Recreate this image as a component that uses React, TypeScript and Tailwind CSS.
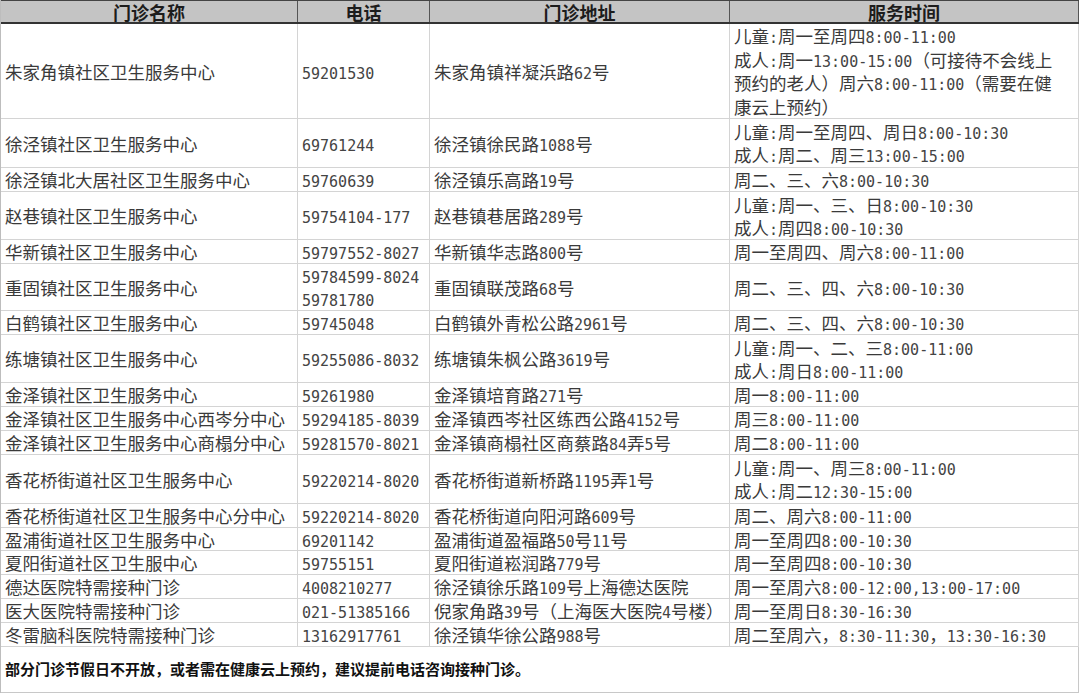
type Row = {
  name: string;
  phone: string[];
  addr: string;
  time: string[];
  h: string;
};

const rows: Row[] = [
  {
    name: "朱家角镇社区卫生服务中心",
    phone: ["59201530"],
    addr: "朱家角镇祥凝浜路62号",
    time: [
      "儿童:周一至周四8:00-11:00",
      "成人:周一13:00-15:00（可接待不会线上",
      "预约的老人）周六8:00-11:00（需要在健",
      "康云上预约）",
    ],
    h: "h-[95px]",
  },
  {
    name: "徐泾镇社区卫生服务中心",
    phone: ["69761244"],
    addr: "徐泾镇徐民路1088号",
    time: ["儿童:周一至周四、周日8:00-10:30", "成人:周二、周三13:00-15:00"],
    h: "h-[49px]",
  },
  {
    name: "徐泾镇北大居社区卫生服务中心",
    phone: ["59760639"],
    addr: "徐泾镇乐高路19号",
    time: ["周二、三、六8:00-10:30"],
    h: "h-[24px]",
  },
  {
    name: "赵巷镇社区卫生服务中心",
    phone: ["59754104-177"],
    addr: "赵巷镇巷居路289号",
    time: ["儿童:周一、三、日8:00-10:30", "成人:周四8:00-10:30"],
    h: "h-[48px]",
  },
  {
    name: "华新镇社区卫生服务中心",
    phone: ["59797552-8027"],
    addr: "华新镇华志路800号",
    time: ["周一至周四、周六8:00-11:00"],
    h: "h-[24px]",
  },
  {
    name: "重固镇社区卫生服务中心",
    phone: ["59784599-8024", "59781780"],
    addr: "重固镇联茂路68号",
    time: ["周二、三、四、六8:00-10:30"],
    h: "h-[47px]",
  },
  {
    name: "白鹤镇社区卫生服务中心",
    phone: ["59745048"],
    addr: "白鹤镇外青松公路2961号",
    time: ["周二、三、四、六8:00-10:30"],
    h: "h-[24px]",
  },
  {
    name: "练塘镇社区卫生服务中心",
    phone: ["59255086-8032"],
    addr: "练塘镇朱枫公路3619号",
    time: ["儿童:周一、二、三8:00-11:00", "成人:周日8:00-11:00"],
    h: "h-[48px]",
  },
  {
    name: "金泽镇社区卫生服务中心",
    phone: ["59261980"],
    addr: "金泽镇培育路271号",
    time: ["周一8:00-11:00"],
    h: "h-[24px]",
  },
  {
    name: "金泽镇社区卫生服务中心西岑分中心",
    phone: ["59294185-8039"],
    addr: "金泽镇西岑社区练西公路4152号",
    time: ["周三8:00-11:00"],
    h: "h-[24px]",
  },
  {
    name: "金泽镇社区卫生服务中心商榻分中心",
    phone: ["59281570-8021"],
    addr: "金泽镇商榻社区商蔡路84弄5号",
    time: ["周二8:00-11:00"],
    h: "h-[24px]",
  },
  {
    name: "香花桥街道社区卫生服务中心",
    phone: ["59220214-8020"],
    addr: "香花桥街道新桥路1195弄1号",
    time: ["儿童:周一、周三8:00-11:00", "成人:周二12:30-15:00"],
    h: "h-[49px]",
  },
  {
    name: "香花桥街道社区卫生服务中心分中心",
    phone: ["59220214-8020"],
    addr: "香花桥街道向阳河路609号",
    time: ["周二、周六8:00-11:00"],
    h: "h-[24px]",
  },
  {
    name: "盈浦街道社区卫生服务中心",
    phone: ["69201142"],
    addr: "盈浦街道盈福路50号11号",
    time: ["周一至周四8:00-10:30"],
    h: "h-[23px]",
  },
  {
    name: "夏阳街道社区卫生服中心",
    phone: ["59755151"],
    addr: "夏阳街道崧润路779号",
    time: ["周一至周四8:00-10:30"],
    h: "h-[24px]",
  },
  {
    name: "德达医院特需接种门诊",
    phone: ["4008210277"],
    addr: "徐泾镇徐乐路109号上海德达医院",
    time: ["周一至周六8:00-12:00,13:00-17:00"],
    h: "h-[24px]",
  },
  {
    name: "医大医院特需接种门诊",
    phone: ["021-51385166"],
    addr: "倪家角路39号（上海医大医院4号楼）",
    time: ["周一至周日8:30-16:30"],
    h: "h-[24px]",
  },
  {
    name: "冬雷脑科医院特需接种门诊",
    phone: ["13162917761"],
    addr: "徐泾镇华徐公路988号",
    time: ["周二至周六，8:30-11:30，13:30-16:30"],
    h: "h-[24px]",
  },
];

const cols = ["w-[297px]", "w-[132px]", "w-[300px]", "flex-1"];

// half-width runs are set in a mono face so digits get the 0.5em advance of the original
function Txt({ s }: { s: string }) {
  const parts = s.split(/([\x20-\x7e]+)/);
  return (
    <>
      {parts.map((p, i) =>
        i % 2 === 1 ? (
          <span key={i} className="text-[15px] text-[#444]" style={{ fontFamily: "'DejaVu Sans Mono', monospace" }}>
            {p}
          </span>
        ) : (
          <span key={i}>{p}</span>
        )
      )}
    </>
  );
}

function Lines({ items }: { items: string[] }) {
  const lh = items.length > 3 ? "h-[23.5px] leading-[23.5px]" : "h-[23px] leading-[23px]";
  return (
    <div className="flex flex-col">
      {items.map((t, j) => (
        <div key={j} className={lh}>
          <Txt s={t} />
        </div>
      ))}
    </div>
  );
}

export default function App() {
  const cell = "flex items-center pl-1 border-r border-[#d4d4d4] whitespace-nowrap leading-[23px]";
  return (
    <div
      className="w-[1080px] h-[694px] bg-white overflow-hidden text-[17.5px] text-[#3a3a3a]"
      style={{ fontFamily: "'Noto Sans CJK SC', sans-serif" }}
    >
      <div className="w-[1079px] border-l border-[#bdbdbd]">
        <div className="flex h-[24px] bg-[#c4c4c4] border-t border-t-[#444] border-b-2 border-b-[#333] font-bold text-[18px] text-[#1c1c1c]">
          {["门诊名称", "电话", "门诊地址", "服务时间"].map((t, i) => (
            <div
              key={t}
              className={cols[i] + " flex items-center justify-center border-r border-[#555] leading-none"}
            >
              {t}
            </div>
          ))}
        </div>
        {rows.map((r, i) => (
          <div key={i} className={"flex border-b border-[#d4d4d4] " + r.h}>
            <div className={cols[0] + " " + cell}>{r.name}</div>
            <div className={cols[1] + " " + cell}>
              <Lines items={r.phone} />
            </div>
            <div className={cols[2] + " " + cell}>
              <Lines items={[r.addr]} />
            </div>
            <div className={cols[3] + " " + cell}>
              <Lines items={r.time} />
            </div>
          </div>
        ))}
        <div className="h-[46px] flex items-center pl-1 border-r border-b border-[#c8c8c8] font-bold text-[15px] text-[#111] whitespace-nowrap">
          部分门诊节假日不开放，或者需在健康云上预约，建议提前电话咨询接种门诊。
        </div>
      </div>
    </div>
  );
}
